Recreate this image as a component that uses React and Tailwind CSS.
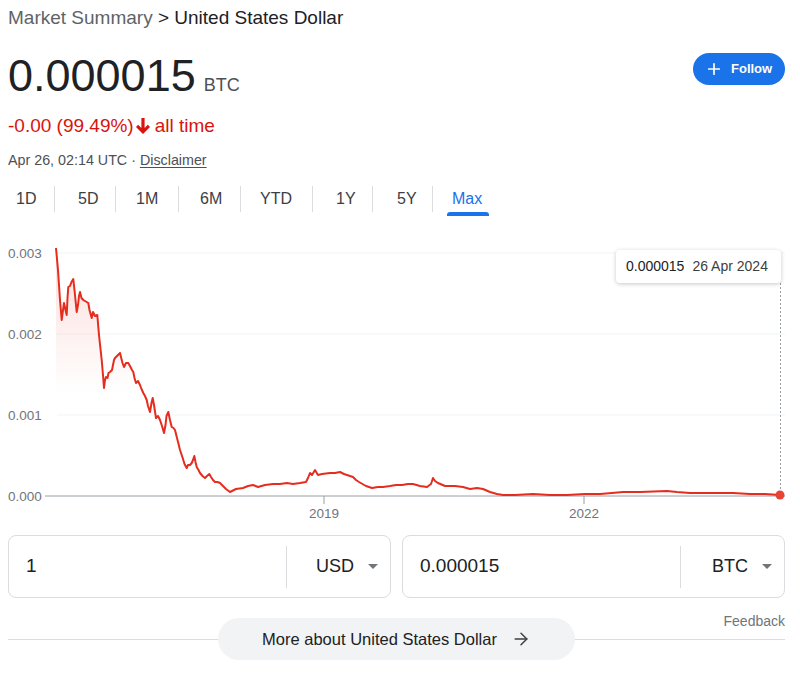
import { Plus, ArrowRight } from "lucide-react";

const FONT = { fontFamily: '"Liberation Sans", Arial, sans-serif' };

// chart points in page coordinates
const POINTS = [
  [56, 248], [58, 270], [60, 300], [61.7, 320], [63, 310], [64, 303], [65.5, 310], [66.7, 315],
  [67.5, 298], [68.3, 287], [70, 286], [71.5, 282], [73.3, 279], [74.5, 290], [75.5, 300], [76.7, 312],
  [78, 305], [79, 296], [80, 292], [81.5, 298], [83.3, 300], [85, 301], [88.3, 303], [89.5, 310],
  [91.7, 318], [93, 312], [95, 316], [97.3, 315], [99, 335], [101.7, 360], [103, 375], [104, 388],
  [105, 380], [106, 377], [107.5, 378], [108.5, 373], [110, 372], [112, 370], [114, 360], [115, 358],
  [117, 356], [119, 354], [120, 353], [121, 357], [122.5, 363], [124, 367], [126, 363], [128.3, 363],
  [130, 366], [132, 370], [133.3, 372], [134.5, 378], [136, 383], [138, 381], [140, 385], [141.5, 389],
  [143.3, 393], [145, 396], [146.7, 400], [148, 406], [150, 412], [151.5, 403], [152.7, 398], [154, 405],
  [156, 418], [158, 416], [160, 420], [162, 426], [164, 433], [165.5, 425], [166.5, 416], [168.3, 412],
  [170, 420], [171.7, 427], [173.5, 428], [175, 430], [177, 438], [178.3, 443], [180, 450], [182.7, 458],
  [184.5, 464], [186.7, 468], [188, 465], [190, 465], [191.7, 463], [193, 460], [194.3, 456], [195.5, 462],
  [196.7, 467], [198.5, 470], [200, 473], [202.5, 476], [205, 478], [207, 476], [209.3, 474], [211, 477],
  [213, 480], [215, 482], [217.5, 482], [220, 483], [223, 486], [226, 489], [230, 492], [236, 489],
  [243, 488], [248, 486], [253, 485], [258, 487], [265, 485], [273, 484], [280, 484], [287, 483],
  [293, 484], [300, 483], [306, 482], [308, 478], [310, 473], [312, 475], [315, 470], [318, 475],
  [322, 474], [330, 473], [335, 473], [340, 472], [344, 474], [347, 475], [353, 477], [356, 480],
  [359, 482], [366, 486], [372, 488], [378, 487], [383, 487], [390, 486], [396, 485], [402, 485],
  [408, 484], [413, 484], [420, 486], [427, 487], [431, 484], [433, 478], [435, 481], [438, 483],
  [445, 486], [455, 486], [463, 487], [470, 489], [477, 488], [483, 489], [490, 492], [497, 494],
  [503, 495], [515, 495], [533, 494], [550, 495], [567, 495], [585, 494], [600, 494], [612, 493],
  [623, 492], [640, 492], [667, 491], [677, 492], [690, 493], [710, 493], [733, 493], [750, 494],
  [765, 494], [780, 495],
];

const linePath = "M" + POINTS.map(([x, y]) => `${x},${y}`).join(" L");
const areaPath = linePath + " L780,496 L56,496 Z";

const TABS = [
  { label: "1D", w: "w-[46px]", pl: "pl-[8px]" },
  { label: "5D", w: "w-[61px]", pl: "pl-[23px]" },
  { label: "1M", w: "w-[63px]", pl: "pl-[20px]" },
  { label: "6M", w: "w-[62px]", pl: "pl-[21px]" },
  { label: "YTD", w: "w-[72px]", pl: "pl-[19px]" },
  { label: "1Y", w: "w-[60px]", pl: "pl-[23px]" },
  { label: "5Y", w: "w-[60px]", pl: "pl-[24px]" },
  { label: "Max", w: "w-[62px]", pl: "pl-[19px]", active: true },
];

function Chart() {
  const grid = [253, 334, 415];
  const labels = [
    ["0.003", 253],
    ["0.002", 334],
    ["0.001", 415],
    ["0.000", 496],
  ];
  return (
    <div className="relative mt-[23px] h-[290px]">
      <svg width="777" height="290" viewBox="8 235 777 290" className="block" style={FONT}>
        <defs>
          <linearGradient id="fade" gradientUnits="userSpaceOnUse" x1="0" y1="250" x2="0" y2="395">
            <stop offset="0" stopColor="#e52d1f" stopOpacity="0.16" />
            <stop offset="1" stopColor="#e52d1f" stopOpacity="0" />
          </linearGradient>
        </defs>
        {grid.map((y) => (
          <line key={y} x1="57" x2="785" y1={y} y2={y} stroke="#f1f3f4" strokeWidth="1" />
        ))}
        <line x1="45" x2="785" y1="496" y2="496" stroke="#9aa0a6" strokeWidth="1" />
        {labels.map(([t, y]) => (
          <text key={t} x="8" y={y} dominantBaseline="central" fontSize="13.5" fill="#70757a">
            {t}
          </text>
        ))}
        <line x1="324" x2="324" y1="496" y2="504" stroke="#9aa0a6" />
        <line x1="584" x2="584" y1="496" y2="504" stroke="#9aa0a6" />
        <text x="324" y="513" textAnchor="middle" dominantBaseline="central" fontSize="13.5" fill="#70757a">2019</text>
        <text x="584" y="513" textAnchor="middle" dominantBaseline="central" fontSize="13.5" fill="#70757a">2022</text>
        <line x1="780.5" x2="780.5" y1="283" y2="495" stroke="#9aa0a6" strokeDasharray="2 2" />
        <path d={areaPath} fill="url(#fade)" />
        <path d={linePath} fill="none" stroke="#e52d1f" strokeWidth="2" strokeLinejoin="round" />
        <circle cx="780" cy="495" r="4.5" fill="#ea4335" />
      </svg>
      {/* tooltip */}
      <div className="absolute left-[608px] top-[15px] w-[165px] h-[33px] bg-white rounded-[4px] shadow-[0_1px_4px_rgba(0,0,0,0.22)] flex items-center pl-[10px] gap-[8px] text-[14px]">
        <span className="text-[#202124]">0.000015</span>
        <span className="text-[#3c4043]">26 Apr 2024</span>
      </div>
    </div>
  );
}

function Converter({ value, unit }) {
  return (
    <div className="flex-1 h-[63px] border border-[#dadce0] rounded-[8px] flex items-center">
      <div className="w-[277px] pl-[17px] text-[19px] text-[#202124]">{value}</div>
      <div className="h-[42px] w-px bg-[#dadce0]" />
      <div className="flex-1 flex items-center justify-end pr-[12px] gap-[14px]">
        <span className="text-[18px] text-[#202124]">{unit}</span>
        <svg width="10" height="5" viewBox="0 0 10 5">
          <path d="M0 0 L10 0 L5 5 Z" fill="#70757a" />
        </svg>
      </div>
    </div>
  );
}

export default function App() {
  return (
    <div className="w-[800px] min-h-[674px] bg-white pl-2 pr-[15px]" style={FONT}>
      {/* Breadcrumb */}
      <div className="pt-[6px] text-[19px] leading-[24px]">
        <span className="text-[#5f6368]">Market Summary</span>
        <span className="text-[#202124]"> &gt; United States Dollar</span>
      </div>

      {/* Price */}
      <div className="mt-[20px] flex items-start justify-between">
        <div className="flex items-baseline">
          <span className="text-[45px] leading-[52px] text-[#202124]">0.000015</span>
          <span className="ml-[8px] text-[18px] text-[#4d5156]">BTC</span>
        </div>
        <button className="mt-[3px] h-[32px] w-[92px] rounded-full bg-[#1a73e8] text-white flex items-center pl-[12px] gap-[8px] text-[13px] font-bold">
          <Plus size={18} strokeWidth={2.25} />
          <span>Follow</span>
        </button>
      </div>

      {/* Change */}
      <div className="mt-[12px] flex items-center text-[19px] leading-[24px] text-[#d9140e]">
        <span>-0.00 (99.49%)</span>
        <svg width="14" height="16" viewBox="0 0 14 16" className="ml-[2px]">
          <path d="M7 16 L0 9 L2.2 6.8 L5.4 10 V0 H8.6 V10 L11.8 6.8 L14 9 Z" fill="#d9140e" />
        </svg>
        <span className="ml-[5px]">all time</span>
      </div>

      {/* Date */}
      <div className="mt-[12px] text-[14.3px] leading-[20px] text-[#4d5156]">
        Apr 26, 02:14 UTC · <span className="underline underline-offset-2">Disclaimer</span>
      </div>

      {/* Tabs */}
      <div className="mt-[16px] flex h-[26px]">
        {TABS.map((t, i) => (
          <div
            key={t.label}
            className={`relative h-[26px] flex items-center text-[16px] ${t.w} ${t.pl} ${
              i > 0 ? "border-l border-[#dadce0]" : ""
            } ${t.active ? "text-[#1a73e8]" : "text-[#3c4043]"}`}
          >
            {t.label}
            {t.active && (
              <div className="absolute left-[14px] top-full w-[42px] h-[4px] rounded-t-[3px] bg-[#1a73e8]" />
            )}
          </div>
        ))}
      </div>

      <Chart />

      {/* Converter */}
      <div className="mt-[10px] flex gap-[11px]">
        <Converter value="1" unit="USD" />
        <Converter value="0.000015" unit="BTC" />
      </div>

      <div className="mt-[14px] text-right text-[14px] leading-[18px] text-[#70757a]">Feedback</div>

      <div className="mt-[-12px] flex items-center">
        <div className="flex-1 h-px bg-[#dadce0]" />
        <div className="h-[42px] w-[357px] rounded-full bg-[#f1f3f4] flex items-center justify-center gap-[14px] text-[16.5px] text-[#202124]">
          <span>More about United States Dollar</span>
          <ArrowRight size={20} strokeWidth={1.75} className="text-[#3c4043]" />
        </div>
        <div className="flex-1 h-px bg-[#dadce0]" />
      </div>
    </div>
  );
}
